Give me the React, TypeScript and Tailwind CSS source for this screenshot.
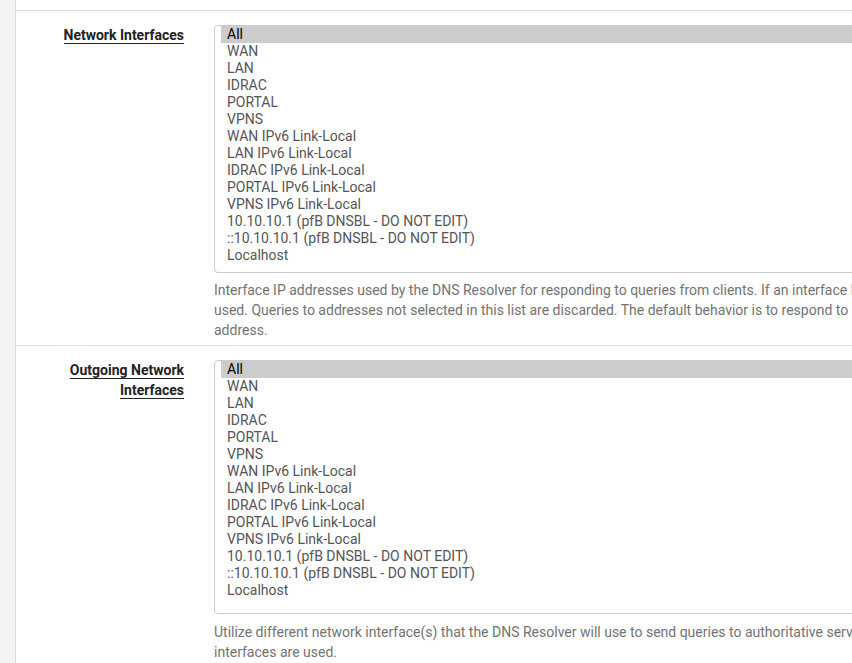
import React from "react";

const items = [
  "All",
  "WAN",
  "LAN",
  "IDRAC",
  "PORTAL",
  "VPNS",
  "WAN IPv6 Link-Local",
  "LAN IPv6 Link-Local",
  "IDRAC IPv6 Link-Local",
  "PORTAL IPv6 Link-Local",
  "VPNS IPv6 Link-Local",
  "10.10.10.1 (pfB DNSBL - DO NOT EDIT)",
  "::10.10.10.1 (pfB DNSBL - DO NOT EDIT)",
  "Localhost",
];

function MultiSelect({ tall }: { tall?: boolean }) {
  return (
    <div
      className={
        "w-[760px] border border-[#cccccc] rounded-[4px] pl-[6px] bg-white " +
        (tall ? "pb-[14px]" : "pb-[8px]")
      }
    >
      {items.map((it, i) => (
        <div
          key={it}
          className={
            "h-[17px] leading-[17px] px-[6px] text-[14px] whitespace-nowrap " +
            (i === 0 ? "bg-[#cccccc] text-black" : "text-[#555555]")
          }
        >
          {it}
        </div>
      ))}
    </div>
  );
}

function Row({
  label,
  help,
  tall,
}: {
  label: React.ReactNode;
  help: string[];
  tall?: boolean;
}) {
  return (
    <div className="flex border-b border-[#dddddd] pt-[14px] pb-[5px]">
      <div className="w-[183px] flex-none pr-[15px] text-right text-[14px] leading-[20px]">
        <span className="font-bold text-[#222222] border-b border-[#222222]">
          {label}
        </span>
      </div>
      <div className="flex-none pl-[15px]">
        <MultiSelect tall={tall} />
        <div
          className={
            "text-[14px] leading-[20px] text-[#737373] whitespace-nowrap " +
            (tall ? "mt-[8px]" : "mt-[7px]")
          }
        >
          {help.map((h) => (
            <div key={h}>{h}</div>
          ))}
        </div>
      </div>
    </div>
  );
}

export default function App() {
  return (
    <div
      className="flex h-[663px] w-[852px] overflow-hidden bg-[#f4f4f4]"
      style={{ fontFamily: "Roboto, 'Noto Sans', sans-serif" }}
    >
      <div className="w-[15px] flex-none" />
      <div className="flex-1 min-w-0 bg-white border-l border-[#dddddd] overflow-hidden">
        <div className="h-[11px] border-b border-[#dddddd]" />
        <Row
          label="Network Interfaces"
          help={[
            "Interface IP addresses used by the DNS Resolver for responding to queries from clients. If an interface has both IPv4 and IPv6 IPs, both are",
            "used. Queries to addresses not selected in this list are discarded. The default behavior is to respond to queries on every available IPv4 and IPv6",
            "address.",
          ]}
        />
        <Row
          tall
          label={
            <>
              Outgoing Network
              <br />
              Interfaces
            </>
          }
          help={[
            "Utilize different network interface(s) that the DNS Resolver will use to send queries to authoritative servers and receive their replies. By default all",
            "interfaces are used.",
          ]}
        />
      </div>
    </div>
  );
}
